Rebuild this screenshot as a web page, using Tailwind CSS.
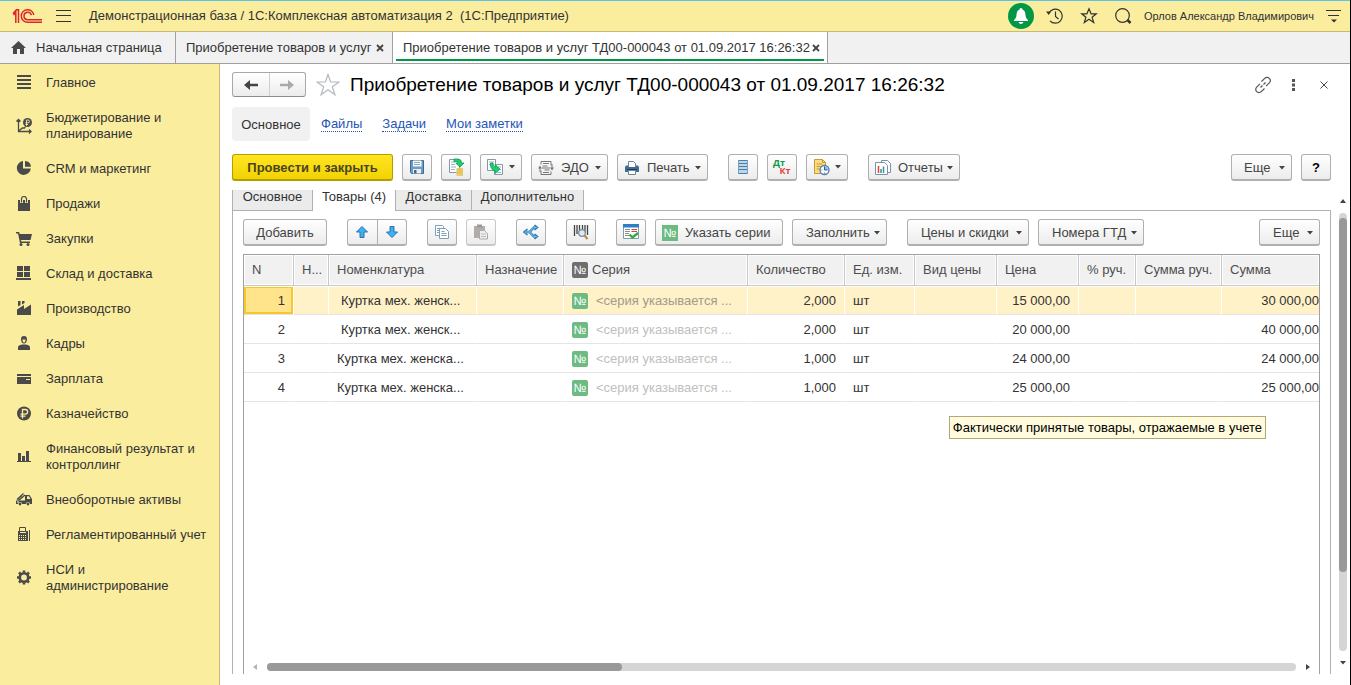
<!DOCTYPE html>
<html lang="ru">
<head>
<meta charset="utf-8">
<meta name="viewport" content="width=device-width, initial-scale=1">
<title>Приобретение товаров и услуг</title>
<script src="https://cdn.jsdelivr.net/npm/@tailwindcss/browser@4"></script>
</head>
<body class="flex h-screen flex-col overflow-hidden border-r border-black bg-white font-['Liberation_Sans',Arial,sans-serif] text-[13px] leading-4 text-[#333]">

<svg class="hidden" aria-hidden="true">
  <symbol id="caret" viewBox="0 0 6 4"><path d="M0 0h6L3 3.5z" fill="#444"/></symbol>
  <symbol id="cross" viewBox="0 0 8 8"><path d="M1 1l6 6M7 1L1 7" stroke="#444" stroke-width="1.8" fill="none"/></symbol>
</svg>

<!-- Application header -->
<header class="flex h-8 shrink-0 items-center border-t border-b border-t-[#5cc4ea] border-b-[#c8b978] bg-[#fbed9e] pl-3 pr-2">
  <svg class="h-[15px] w-[30px]" viewBox="0 0 30 15" fill="none" stroke="#e0242b" stroke-width="1.5" aria-label="1С" role="img">
    <path d="M1 4.500L3.800 1.500V14M1.500 6L4 3.500M6.500 14V.8H3.800"/>
    <path d="M21.800 6A6.300 6.300 0 1 0 15.500 13.300H30M19.300 6.200A3.700 3.700 0 1 0 15.500 10.700H30"/>
  </svg>
  <button class="ml-3.5 flex h-6 w-4 items-center" aria-label="Меню">
    <svg class="h-3 w-[15px]" viewBox="0 0 15 12" stroke="#333"><path d="M0 .5h15M0 5.500h15M0 11.500h15"/></svg>
  </button>
  <span class="ml-[17px] whitespace-pre">Демонстрационная база / 1С:Комплексная автоматизация 2  (1С:Предприятие)</span>
  <div class="ml-auto flex items-center">
    <button class="flex size-[26px] items-center justify-center rounded-full bg-[#009846]" aria-label="Уведомления">
      <svg class="h-4 w-4" viewBox="0 0 16 16" fill="#fff"><path d="M8 0c1 0 1.500.8 1.500 1.600C12 2.500 12.300 5 12.500 7c.2 2.400.8 3.600 2.500 5v1H1v-1c1.700-1.400 2.300-2.600 2.500-5 .2-2 .5-4.500 3-5.400C6.500.8 7 0 8 0zM5.500 14h5c-.5 1.300-1.400 2-2.500 2s-2-.7-2.500-2z"/></svg>
    </button>
    <button class="ml-3 size-[18px]" aria-label="История">
      <svg class="size-[18px]" viewBox="0 0 18 18" fill="none" stroke="#333" stroke-width="1.200"><path d="M3 6A7 7 0 1 1 4 13.800M9.500 4.500V9.500l3 2.500"/><path d="M0 4.500h5L2.800 8z" fill="#333" stroke="none"/></svg>
    </button>
    <button class="ml-4 size-[18px]" aria-label="Избранное">
      <svg class="size-[18px]" viewBox="0 0 18 18" fill="none" stroke="#333" stroke-width="1.200"><path d="M9 1.800l2.100 5h5.200l-4.200 3.400 1.600 5.300L9 12.300l-4.700 3.200 1.600-5.300L1.700 6.800h5.200z"/></svg>
    </button>
    <button class="ml-4 size-[18px]" aria-label="Поиск">
      <svg class="size-[18px]" viewBox="0 0 18 18" fill="none" stroke="#333"><circle cx="8.500" cy="8.500" r="6.800" stroke-width="1.200"/><path d="M13.500 13l3 3" stroke-width="2.500"/></svg>
    </button>
    <span class="ml-3 text-[11px]">Орлов Александр Владимирович</span>
    <button class="ml-[11px] h-[14px] w-[17px]" aria-label="Настройки">
      <svg class="h-[14px] w-[17px]" viewBox="0 0 17 14"><path d="M1 1.500h15M3 6.500h11" stroke="#333"/><path d="M6 10.500h6l-3 3z" fill="#333"/></svg>
    </button>
  </div>
</header>

<!-- Open windows -->
<nav class="flex h-8 shrink-0 items-stretch border-b border-[#a0a0a0] bg-[#f1f1f1]" aria-label="Открытые окна">
  <a href="#" class="flex w-[176px] items-center border-r border-[#a0a0a0] pl-[11px]">
    <svg class="h-[13px] w-[15px]" viewBox="0 0 15 13" fill="#4a4a4a"><path d="M7.500 0L15 7h-2v6H9V8H6v5H2V7H0z"/></svg>
    <span class="ml-[10px]">Начальная страница</span>
  </a>
  <div class="flex w-[217px] items-center border-r border-[#a0a0a0] pl-[10px]">
    <a href="#">Приобретение товаров и услуг</a>
    <button class="ml-auto mr-2 size-2" aria-label="Закрыть вкладку"><svg class="size-2"><use href="#cross"/></svg></button>
  </div>
  <div class="flex w-[435px] flex-col border-r border-[#a0a0a0] bg-white px-[3px] pb-[2px]">
    <div class="flex grow items-center border-b-2 border-[#009846] pl-[7px] pr-1 pt-1">
      <a href="#" class="whitespace-nowrap">Приобретение товаров и услуг ТД00-000043 от 01.09.2017 16:26:32</a>
      <button class="ml-auto size-2" aria-label="Закрыть вкладку"><svg class="size-2"><use href="#cross"/></svg></button>
    </div>
  </div>
</nav>

<div class="flex min-h-0 grow">

  <!-- Sections -->
  <aside class="w-[220px] shrink-0 border-r border-[#c8b978] bg-[#fbed9e] pt-px">
    <nav aria-label="Разделы">
      <a href="#" class="flex items-center gap-3.5 pb-[9px] pl-4 pt-[10px]"><svg class="size-4" viewBox="0 0 16 16" fill="#4a4a4a"><path d="M1 0h14v2H1zM1 4h14v2H1zM1 8h14v2H1zM1 12h14v2H1z"/></svg>Главное</a>
      <a href="#" class="flex items-center gap-3.5 pb-[9px] pl-4 pt-[10px]"><svg class="size-4 shrink-0" viewBox="0 0 16 16" fill="none" stroke="#4a4a4a"><path d="M2.500 1v12.500H15M.5 3.500l2-2 2 2M13 11.500l2 2-2 2M2.500 13l4-3h2l1-1.500" stroke-width="1.300"/><circle cx="11.500" cy="4.500" r="4.500" fill="#4a4a4a" stroke="none"/><path d="M10.500 7.800V2h1.500a1.400 1.400 0 0 1 0 2.900H9.500M9.500 6.500h2.500" stroke="#fbed9e" stroke-width=".9"/></svg><span>Бюджетирование и<br>планирование</span></a>
      <a href="#" class="flex items-center gap-3.5 pb-[9px] pl-4 pt-[10px]"><svg class="size-4" viewBox="0 0 16 16" fill="#4a4a4a"><path d="M7 0v7.500h7.800A7 7 0 1 1 7 0z"/><path d="M9 0a6.500 6.500 0 0 1 6 5.700H9z"/></svg>CRM и маркетинг</a>
      <a href="#" class="flex items-center gap-3.5 pb-[9px] pl-4 pt-[10px]"><svg class="size-4" viewBox="0 0 16 16"><path d="M2 4h12v11H2z" fill="#4a4a4a"/><path d="M5.500 7V3.500a2.500 2.500 0 0 1 5 0V7" fill="none" stroke="#fbed9e" stroke-width="3"/><path d="M5.500 6.500V3a2.500 2.500 0 0 1 5 0V6.500" fill="none" stroke="#4a4a4a" stroke-width="1.200"/></svg>Продажи</a>
      <a href="#" class="flex items-center gap-3.5 pb-[9px] pl-4 pt-[10px]"><svg class="size-4" viewBox="0 0 16 16" fill="#4a4a4a"><path d="M0 1h3.200l.5 2H16l-1.500 6H5l.3 1.500H14V12H4L2 2.500H0z"/><circle cx="5" cy="13.500" r="1.500"/><circle cx="12" cy="13.500" r="1.500"/></svg>Закупки</a>
      <a href="#" class="flex items-center gap-3.5 pb-[9px] pl-4 pt-[10px]"><svg class="size-4" viewBox="0 0 16 16" fill="#4a4a4a"><path d="M1 0h6v5H1zM8 0h6v5H8zM1 6h6v5H1zM8 6h6v5H8zM0 12h15v2H0z"/></svg>Склад и доставка</a>
      <a href="#" class="flex items-center gap-3.5 pb-[9px] pl-4 pt-[10px]"><svg class="size-4" viewBox="0 0 16 16" fill="#4a4a4a"><path d="M1 14V8.500L8 4v4l7-4.500V14zM2 0h2.500v4L2 5.500zM6 0h2.500v2L6 3.500z"/></svg>Производство</a>
      <a href="#" class="flex items-center gap-3.5 pb-[9px] pl-4 pt-[10px]"><svg class="size-4" viewBox="0 0 16 16" fill="#4a4a4a"><path d="M8 0c2.500 0 3 1.500 3 3.500S9.800 7.500 8 7.500 5 5.500 5 3.500 5.500 0 8 0zM2 14v-2.500c0-2 1.500-2.500 4-3h4c2.500.5 4 1 4 3V14z"/><path d="M6.500 3.500h3c0 2-.5 3-1.500 3s-1.500-1-1.500-3z" fill="#fbed9e"/></svg>Кадры</a>
      <a href="#" class="flex items-center gap-3.5 pb-[9px] pl-4 pt-[10px]"><svg class="size-4" viewBox="0 0 16 16" fill="#4a4a4a"><path d="M1 3h14v2H1zM1 6h14v7H1z"/><path d="M10 8h4v1h-4z" fill="#fbed9e"/></svg>Зарплата</a>
      <a href="#" class="flex items-center gap-3.5 pb-[9px] pl-4 pt-[10px]"><svg class="size-4" viewBox="0 0 16 16"><circle cx="8" cy="7.500" r="7" fill="#4a4a4a"/><path d="M6.500 12.500v-9h2.800a2.300 2.300 0 0 1 0 4.700H4.500M4.500 10.200h5" fill="none" stroke="#fbed9e" stroke-width="1.300"/></svg>Казначейство</a>
      <a href="#" class="flex items-center gap-3.5 pb-[9px] pl-4 pt-[10px]"><svg class="size-4 shrink-0" viewBox="0 0 16 16" fill="#4a4a4a"><path d="M1 12h14v1H1zM2 4h3v8H2zM6 7h3v5H6zM10 2h3v10h-3z"/></svg><span>Финансовый результат и<br>контроллинг</span></a>
      <a href="#" class="flex items-center gap-3.5 pb-[9px] pl-4 pt-[10px]"><svg class="size-4" viewBox="0 0 16 16"><path d="M1 7.500L7.500 1.500M2.500 8.500L9 3M2 6l2 2M4.500 4l2 2" fill="none" stroke="#4a4a4a" stroke-width="1.300"/><path d="M0 8.500h9V3h4.500L16 7v5h-2a2 2 0 0 0-4 0H6a2 2 0 0 0-4 0H0z" fill="#4a4a4a"/><path d="M11 4.200h2L14.500 7H11zM1 9.500h2v1H1z" fill="#fbed9e"/><circle cx="4" cy="12" r="1.400" fill="#4a4a4a"/><circle cx="12" cy="12" r="1.400" fill="#4a4a4a"/></svg>Внеоборотные активы</a>
      <a href="#" class="flex items-center gap-3.5 pb-[9px] pl-4 pt-[10px]"><svg class="size-4" viewBox="0 0 16 16"><path d="M2 4h10v10H2zM13 3h1v11h-1z" fill="#4a4a4a"/><path d="M3.500 4V.5h6V4" fill="none" stroke="#4a4a4a"/><path d="M4 5h6v1H4zM3 8h1v1H3zM5 8h1v1H5zM7 8h1v1H7zM9 8h1v1H9zM3 10h1v1H3zM5 10h1v1H5zM7 10h1v1H7zM9 10h1v1H9zM3 12h1v1H3zM5 12h1v1H5zM7 12h1v1H7zM9 12h1v1H9z" fill="#fbed9e"/></svg>Регламентированный учет</a>
      <a href="#" class="flex items-center gap-3.5 pb-[9px] pl-4 pt-[10px]"><svg class="size-4 shrink-0" viewBox="0 0 16 16" fill="none" stroke="#4a4a4a"><circle cx="8" cy="7.500" r="4.200" stroke-width="2.600"/><path d="M8 .5v2M8 12.500v2M1 7.500h2M13 7.500h2M3 2.500L4.500 4M11.500 11l1.500 1.500M3 12.500L4.500 11M11.500 4L13 2.500" stroke-width="2.600"/></svg><span>НСИ и<br>администрирование</span></a>
    </nav>
  </aside>

  <main class="flex min-w-0 grow flex-col pb-[11px] pl-3">

    <!-- Title -->
    <div class="flex h-[41px] shrink-0 items-center pr-[22px]">
      <div class="flex h-[25px] w-[74px] rounded-[3px] border border-[#a8a8a8] border-b-[#8c8c8c] bg-linear-to-b from-white to-[#ececec]">
        <button class="flex flex-1 items-center justify-center border-r border-[#cfcfcf]" aria-label="Назад"><svg class="h-3 w-3.5" viewBox="0 0 14 12"><path d="M0 6l6-5v3.800h8v2.400H6V11z" fill="#444"/></svg></button>
        <button class="flex flex-1 items-center justify-center" aria-label="Вперед"><svg class="h-3 w-3.5" viewBox="0 0 14 12"><path d="M14 6L8 1v3.800H0v2.400h8V11z" fill="#aaa"/></svg></button>
      </div>
      <button class="ml-[10px] size-6" aria-label="В избранное"><svg class="size-6" viewBox="0 0 24 24" fill="none" stroke="#b4b9be" stroke-width="1.200"><path d="M12 1.500l2.600 7.500H23l-6.700 4.700 2.600 8L12 16.800l-6.900 4.900 2.600-8L1 9h8.400z"/></svg></button>
      <h1 class="ml-2.5 whitespace-nowrap text-[19px] leading-6 text-black">Приобретение товаров и услуг ТД00-000043 от 01.09.2017 16:26:32</h1>
      <div class="ml-auto flex items-center">
        <button class="size-[18px]" aria-label="Ссылка"><svg class="size-[18px]" viewBox="0 0 18 18" fill="none" stroke="#555" stroke-width="1.200"><path d="M7.500 5.500l3.200-3.200a3.200 3.200 0 0 1 4.600 4.600L12 10.200M10.500 12.500l-3.200 3.200a3.200 3.200 0 0 1-4.600-4.600L6 7.800M6.500 11.500l2-2M9.500 8.500l2-2"/></svg></button>
        <button class="ml-[19px] h-3 w-[5px]" aria-label="Действия"><svg class="h-3 w-[5px]" viewBox="0 0 5 12" fill="#555"><path d="M1 0h3v3H1zM1 4.500h3v3H1zM1 9h3v3H1z"/></svg></button>
        <button class="ml-6 size-2" aria-label="Закрыть"><svg class="size-2" viewBox="0 0 8 8" stroke="#444" stroke-width="1"><path d="M.5.5l7 7M7.500.5l-7 7"/></svg></button>
      </div>
    </div>

    <!-- Related pages -->
    <nav class="mt-0.5 flex h-[34px] shrink-0 items-center text-[#1f55b5]" aria-label="Навигация формы">
      <span class="flex h-full w-[78px] items-center justify-center rounded bg-[#f1f1f1] pt-px text-[#333]">Основное</span>
      <a href="#" class="ml-[11px] mt-px border-b border-dotted border-[#1f55b5] leading-[14px]">Файлы</a>
      <a href="#" class="ml-5 mt-px border-b border-dotted border-[#1f55b5] leading-[14px]">Задачи</a>
      <a href="#" class="ml-5 mt-px border-b border-dotted border-[#1f55b5] leading-[14px]">Мои заметки</a>
    </nav>

    <!-- Document commands -->
    <div class="mt-[13px] flex h-[27px] shrink-0 gap-[9px] pr-[19px]">
      <button class="w-[161px] rounded-[3px] border border-[#b59d00] border-b-2 bg-linear-to-b from-[#ffe620] to-[#f2d200] pt-px font-bold text-[#4a4420]">Провести и закрыть</button>
      <button aria-label="Записать" class="flex w-[30px] items-center justify-center rounded-[3px] border border-b-2 border-[#b0b0b0] bg-linear-to-b from-white to-[#ececec]"><svg class="size-4" viewBox="0 0 16 16"><path d="M1.500 1.500h13v13h-12l-1-1z" fill="#6c9cc5" stroke="#41698c"/><path d="M4 1.500h8.500v6H4z" fill="#f4f8fb"/><path d="M5 3.500h6M5 5.500h6" stroke="#8fa9bd"/><path d="M4 10h8v4.500H4z" fill="#e8eef3"/><path d="M5 11h2.500v3.500H5z" fill="#41698c"/></svg></button>
      <button aria-label="Провести" class="flex w-[30px] items-center justify-center rounded-[3px] border border-b-2 border-[#b0b0b0] bg-linear-to-b from-white to-[#ececec]"><svg class="size-[18px]" viewBox="0 0 18 18"><path d="M2.500 1.500h10v13h-10z" fill="#fff" stroke="#8398aa"/><path d="M4 4h4M4 6.500h4M4 9h5M4 11.500h4" stroke="#9fb0be"/><path d="M7 1h4q3.500 0 3.500 4h2.500L13 9 8.700 5h2.300Q11 3.500 9 3.500H7z" fill="#19d070" stroke="#129a50" stroke-width=".8"/><path d="M9.500 10.500h6.500v6H9.500z" fill="#f8e08a"/><path d="M9.500 11h6.500M9.500 13h6.500M9.500 15h6.500M9.500 17h6.500" stroke="#d9a92d"/></svg></button>
      <button aria-label="Создать на основании" class="flex w-[42px] items-center gap-1 rounded-[3px] border border-b-2 border-[#b0b0b0] bg-linear-to-b from-white to-[#ececec] pl-1.5"><svg class="size-[18px]" viewBox="0 0 18 18"><path d="M.5 1.500h8v11h-8z" fill="#fff" stroke="#8398aa"/><path d="M2 4h5M2 6.500h3" stroke="#9fb0be"/><path d="M9.500 6.500h6v10h-8v-4z" fill="#fff" stroke="#8398aa"/><path d="M11 9h3M11 11.500h3M10 14.500h4" stroke="#9fb0be"/><path d="M3.500 5H6q0 3.500 2 4.500V6.500l5 4.500-5 4.500v-2.700Q3 12 3.500 5z" fill="#19d070" stroke="#129a50" stroke-width=".8"/></svg><svg class="h-1 w-1.5"><use href="#caret"/></svg></button>
      <button class="flex w-[77px] items-center rounded-[3px] border border-b-2 border-[#b0b0b0] bg-linear-to-b from-white to-[#ececec] px-1.5 pt-px text-[#444]"><svg class="size-4" viewBox="0 0 16 16" fill="none" stroke="#777"><path d="M3 4.500v-3h10v4M13 11.500v3H3v-4M5 3.500h6M4.500 6h5M4 8h8M6.500 10h5M5 12.500h6M2 12V7.500h1M14 4v4.500h-1"/><path d="M0 8.500h4L2 5.500zM12 7.500h4l-2 3z" fill="#777" stroke="none"/></svg><span class="ml-[7px]">ЭДО</span><svg class="ml-auto h-1 w-1.5"><use href="#caret"/></svg></button>
      <button class="flex w-[91px] items-center rounded-[3px] border border-b-2 border-[#b0b0b0] bg-linear-to-b from-white to-[#ececec] px-1.5 pt-px text-[#444]"><svg class="size-4" viewBox="0 0 16 16"><path d="M4.500 7V1.500h5l2 2V7" fill="#fff" stroke="#6d8296"/><path d="M2 5.500h2V7h8V5.500h2l1 1.500v5H1V7z" fill="#3f6d94"/><path d="M3 9.500h10" stroke="#1d3c59"/><path d="M4.500 10.500h7v4h-7z" fill="#fff" stroke="#6d8296"/></svg><span class="ml-[7px]">Печать</span><svg class="ml-auto h-1 w-1.5"><use href="#caret"/></svg></button>
      <button aria-label="Реестр" class="ml-[11px] flex w-[30px] items-center justify-center rounded-[3px] border border-b-2 border-[#b0b0b0] bg-linear-to-b from-white to-[#ececec]"><svg class="h-[14px] w-3" viewBox="0 0 12 14"><path d="M1 0h10v14H1z" fill="#b9d6ea"/><path d="M1 .5h10M1 3.500h10M1 6.500h10M1 9.500h10M1 13.500h10" stroke="#4e7da1"/><path d="M1.500 0v14M10.500 0v14" stroke="#7aa1be"/></svg></button>
      <button aria-label="Движения документа" class="flex w-[30px] flex-col items-center justify-center rounded-[3px] border border-b-2 border-[#b0b0b0] bg-linear-to-b from-white to-[#ececec] font-['Open_Sans',sans-serif] text-[9px] leading-[8px] font-bold"><span class="pr-1.5 text-[#12964b]">Дт</span><span class="pl-1.5 text-[#e04038]">Кт</span></button>
      <button aria-label="Структура подчиненности" class="flex w-[42px] items-center gap-1 rounded-[3px] border border-b-2 border-[#b0b0b0] bg-linear-to-b from-white to-[#ececec] pl-1.5"><svg class="size-[18px]" viewBox="0 0 18 18"><path d="M1.500 1.500h8l3 3v11h-11z" fill="#fbdc80" stroke="#c89a35"/><path d="M9.500 1.500v3h3M3.500 6h6M3.500 8.500h4M3.500 11h3" fill="none" stroke="#c89a35"/><circle cx="11.500" cy="12" r="4.500" fill="#fff" stroke="#4181b5" stroke-width="1.300"/><path d="M11.500 12V8.500A3.500 3.500 0 0 1 15 12z" fill="#8cbce0"/><path d="M11.500 8.500V12h3" fill="none" stroke="#2e6290"/><path d="M8.500 12h1M11.500 14.500v1" stroke="#e04038"/></svg><svg class="h-1 w-1.5"><use href="#caret"/></svg></button>
      <button class="ml-[11px] flex w-[92px] items-center rounded-[3px] border border-b-2 border-[#b0b0b0] bg-linear-to-b from-white to-[#ececec] px-1.5 pt-px text-[#444]"><svg class="size-4" viewBox="0 0 16 16"><path d="M6.500.5h6l3 3v9h-9z" fill="#fff" stroke="#7b93a8"/><path d="M.5 2.500h9l3 3v9H.5z" fill="#fff" stroke="#7b93a8"/><path d="M3.500 6v7" stroke="#e04038" stroke-width="1.500"/><path d="M6 9v4" stroke="#2ba35a" stroke-width="1.500"/><path d="M8.500 6.500V13" stroke="#4a86b8" stroke-width="1.500"/></svg><span class="ml-[7px]">Отчеты</span><svg class="ml-auto h-1 w-1.5"><use href="#caret"/></svg></button>
      <button class="ml-auto flex w-[61px] items-center rounded-[3px] border border-b-2 border-[#b0b0b0] bg-linear-to-b from-white to-[#ececec] pl-3 pr-1.5 pt-px text-[#444]">Еще<svg class="ml-auto h-1 w-1.5"><use href="#caret"/></svg></button>
      <button class="w-[30px] rounded-[3px] border border-b-2 border-[#b0b0b0] bg-linear-to-b from-white to-[#ececec] pt-px font-bold text-black">?</button>
    </div>

    <div class="mt-[9px] flex min-h-0 grow">
      <div class="flex min-w-0 grow flex-col">

        <!-- Document tabs -->
        <div class="flex h-[21px] shrink-0 leading-[14px]" role="tablist">
          <button role="tab" class="w-[81px] border-x border-b border-[#b0b0b0] bg-[#ebebeb] pb-1.5">Основное</button>
          <button role="tab" aria-selected="true" class="w-[82px] border-b border-white pb-1.5">Товары (4)</button>
          <button role="tab" class="w-[77px] border-x border-b border-[#b0b0b0] bg-[#ebebeb] pb-1.5">Доставка</button>
          <button role="tab" class="w-[112px] border-r border-b border-[#b0b0b0] bg-[#ebebeb] pb-1.5">Дополнительно</button>
          <div class="grow border-b border-[#b0b0b0]"></div>
        </div>

        <div class="flex min-h-0 grow flex-col border-x border-[#b0b0b0] px-2.5 pt-2">

          <!-- Table commands -->
          <div class="flex h-[27px] shrink-0 gap-[9px] text-[#444]">
            <button class="w-[84px] rounded-[3px] border border-b-2 border-[#b0b0b0] bg-linear-to-b from-white to-[#ececec] pt-px">Добавить</button>
            <div class="ml-[11px] flex w-[60px] rounded-[3px] border border-b-2 border-[#b0b0b0] bg-linear-to-b from-white to-[#ececec]">
              <button aria-label="Вверх" class="flex flex-1 items-center justify-center border-r border-[#b0b0b0]"><svg class="size-3" viewBox="0 0 12 12"><path d="M6 .5L11.500 6H8v5.500H4V6H.5z" fill="#41aef0" stroke="#2276ac"/></svg></button>
              <button aria-label="Вниз" class="flex flex-1 items-center justify-center"><svg class="size-3" viewBox="0 0 12 12"><path d="M6 11.500L.5 6H4V.5h4V6h3.500z" fill="#41aef0" stroke="#2276ac"/></svg></button>
            </div>
            <button aria-label="Копировать" class="ml-[11px] flex w-[30px] items-center justify-center rounded-[3px] border border-b-2 border-[#b0b0b0] bg-linear-to-b from-white to-[#ececec]"><svg class="size-4" viewBox="0 0 16 16" fill="#fff" stroke="#7da0bd"><path d="M1.500 1.500h7l1 1v9h-8z"/><path d="M3 4.500h4M3 6.500h3M3 8.500h3"/><path d="M5.500 4.500h6l3 3v7h-9z"/><path d="M7.500 7.500h3M7.500 9.500h5M7.500 11.500h5"/></svg></button>
            <button aria-label="Вставить" class="flex w-[30px] items-center justify-center rounded-[3px] border border-b-2 border-[#c8c8c8] bg-linear-to-b from-white to-[#ececec]"><svg class="size-4" viewBox="0 0 16 16"><path d="M1 2h11v12H1z" fill="#b5aba7"/><path d="M4 .5h5v3H4z" fill="#999"/><path d="M6.500 6.500h5l3 3v5.500h-8z" fill="#eee" stroke="#aaa"/><path d="M8 10h5M8 12.500h5" stroke="#bbb"/></svg></button>
            <button aria-label="Разбить строку" class="ml-[11px] flex w-[30px] items-center justify-center rounded-[3px] border border-b-2 border-[#b0b0b0] bg-linear-to-b from-white to-[#ececec]"><svg class="size-4" viewBox="0 0 16 16" fill="none"><path d="M3 8h3.500L11 3.500h2M6.500 8l4.500 4.500h2" stroke="#2b7db8" stroke-width="2.400"/><path d="M4.500 5L1 8l3.500 3M11.500 1l3 2.500-3 2.500M11.500 10l3 2.500-3 2.500" stroke="#2b7db8" stroke-width="1.600"/><path d="M2.500 8h4L11 3.500h2.500M6.500 8l4.500 4.500h2.500" stroke="#7cc9f5"/></svg></button>
            <button aria-label="Поиск по штрихкоду" class="ml-[11px] flex w-[30px] items-center justify-center rounded-[3px] border border-b-2 border-[#b0b0b0] bg-linear-to-b from-white to-[#ececec]"><svg class="size-4" viewBox="0 0 16 16"><path d="M1.500 1v11M4 1v9M6.500 1v8M9.500 1v8M12 1v8M14.500 1v10" stroke="#444" stroke-width="1.300"/><circle cx="9" cy="9" r="3.300" fill="#d8ebf6" stroke="#7f8b94" stroke-width="1.200"/><path d="M11.500 11.500L14.500 15" stroke="#b78a4c" stroke-width="2"/></svg></button>
            <button aria-label="Заполнить и проверить" class="ml-[11px] flex w-[30px] items-center justify-center rounded-[3px] border border-b-2 border-[#b0b0b0] bg-linear-to-b from-white to-[#ececec]"><svg class="size-4" viewBox="0 0 16 16"><path d="M.5.5h15v14H.5z" fill="#fff" stroke="#7d9bb5"/><path d="M0 0h16v3.500H0z" fill="#2b80c5"/><path d="M2 5.500h5M2 7.500h5M2 9.500h4M2 11.500h4" stroke="#8c8c8c"/><path d="M8.500 5.500H14M8.500 7.500H14" stroke="#e04038"/><path d="M6.500 10.500l3 3L15 9" fill="none" stroke="#35a843" stroke-width="2.400"/></svg></button>
            <button class="flex w-[128px] items-center rounded-[3px] border border-b-2 border-[#b0b0b0] bg-linear-to-b from-white to-[#ececec] pl-1.5 pt-px"><span class="flex size-4 items-center justify-center bg-[#6dbb83] text-[12px] text-white">№</span><span class="ml-[7px]">Указать серии</span></button>
            <button class="flex w-[95px] items-center rounded-[3px] border border-b-2 border-[#b0b0b0] bg-linear-to-b from-white to-[#ececec] pl-[13px] pr-1.5 pt-px">Заполнить<svg class="ml-auto h-1 w-1.5"><use href="#caret"/></svg></button>
            <button class="ml-[11px] flex w-[122px] items-center rounded-[3px] border border-b-2 border-[#b0b0b0] bg-linear-to-b from-white to-[#ececec] pl-[13px] pr-1.5 pt-px">Цены и скидки<svg class="ml-auto h-1 w-1.5"><use href="#caret"/></svg></button>
            <button class="flex w-[106px] items-center rounded-[3px] border border-b-2 border-[#b0b0b0] bg-linear-to-b from-white to-[#ececec] pl-[13px] pr-1.5 pt-px">Номера ГТД<svg class="ml-auto h-1 w-1.5"><use href="#caret"/></svg></button>
            <button class="ml-auto flex w-[61px] items-center rounded-[3px] border border-b-2 border-[#b0b0b0] bg-linear-to-b from-white to-[#ececec] pl-[13px] pr-1.5 pt-px">Еще<svg class="ml-auto h-1 w-1.5"><use href="#caret"/></svg></button>
          </div>

          <!-- Goods -->
          <div class="relative mt-2 flex min-h-0 grow flex-col border-x border-t border-[#a0a0a0]">
            <table class="w-full table-fixed border-separate border-spacing-0">
              <colgroup><col class="w-[50px]"><col class="w-[35px]"><col class="w-[148px]"><col class="w-[87px]"><col class="w-[184px]"><col class="w-[97px]"><col class="w-[70px]"><col class="w-[82px]"><col class="w-[82px]"><col class="w-[57px]"><col class="w-[86px]"><col></colgroup>
              <thead>
                <tr class="h-[31px] text-left text-[#4d4d4d] *:overflow-hidden *:border-r *:border-b *:border-[#c8c8c8] *:bg-[#f1f1f1] *:px-2 *:font-normal *:whitespace-nowrap *:inset-ring *:inset-ring-white">
                  <th>N</th><th>Н...</th><th>Номенклатура</th><th>Назначение</th>
                  <th><span class="flex items-center gap-1"><span class="flex size-4 items-center justify-center rounded-xs bg-[#6e6e6e] text-[12px] text-white">№</span>Серия</span></th>
                  <th>Количество</th><th>Ед. изм.</th><th>Вид цены</th><th>Цена</th><th>% руч.</th><th>Сумма руч.</th><th class="border-r-0!">Сумма</th>
                </tr>
              </thead>
              <tbody>
                <tr class="h-[29px] *:border-r *:border-b *:border-white *:border-b-[#e4e4e4] *:bg-[#fff1c8] *:px-2 *:pt-px *:whitespace-nowrap *:inset-shadow-[0_1px_0_#fff]">
                  <td class="bg-[#ffe48c]! text-right inset-ring-2 inset-ring-[#f8c828]">1</td><td></td><td><span class="pl-1">Куртка мех. женск...</span></td><td></td>
                  <td><span class="flex items-center gap-2 text-[#a19b8b]"><span class="flex size-4 items-center justify-center rounded-xs bg-[#6dbb83] text-[12px] text-white">№</span>&lt;серия указывается ...</span></td>
                  <td class="text-right">2,000</td><td>шт</td><td></td><td class="text-right">15 000,00</td><td></td><td></td><td class="border-r-0! px-0! text-right">30 000,00</td>
                </tr>
                <tr class="h-[29px] *:border-r *:border-b *:border-white *:border-b-[#e4e4e4] *:px-2 *:pt-px *:whitespace-nowrap">
                  <td class="text-right">2</td><td></td><td><span class="pl-1">Куртка мех. женск...</span></td><td></td>
                  <td><span class="flex items-center gap-2 text-[#c0c0c0]"><span class="flex size-4 items-center justify-center rounded-xs bg-[#6dbb83] text-[12px] text-white">№</span>&lt;серия указывается ...</span></td>
                  <td class="text-right">2,000</td><td>шт</td><td></td><td class="text-right">20 000,00</td><td></td><td></td><td class="border-r-0! px-0! text-right">40 000,00</td>
                </tr>
                <tr class="h-[29px] *:border-r *:border-b *:border-white *:border-b-[#e4e4e4] *:px-2 *:pt-px *:whitespace-nowrap">
                  <td class="text-right">3</td><td></td><td>Куртка мех. женска...</td><td></td>
                  <td><span class="flex items-center gap-2 text-[#c0c0c0]"><span class="flex size-4 items-center justify-center rounded-xs bg-[#6dbb83] text-[12px] text-white">№</span>&lt;серия указывается ...</span></td>
                  <td class="text-right">1,000</td><td>шт</td><td></td><td class="text-right">24 000,00</td><td></td><td></td><td class="border-r-0! px-0! text-right">24 000,00</td>
                </tr>
                <tr class="h-[29px] *:border-r *:border-b *:border-white *:border-b-[#e4e4e4] *:px-2 *:pt-px *:whitespace-nowrap">
                  <td class="text-right">4</td><td></td><td>Куртка мех. женска...</td><td></td>
                  <td><span class="flex items-center gap-2 text-[#c0c0c0]"><span class="flex size-4 items-center justify-center rounded-xs bg-[#6dbb83] text-[12px] text-white">№</span>&lt;серия указывается ...</span></td>
                  <td class="text-right">1,000</td><td>шт</td><td></td><td class="text-right">25 000,00</td><td></td><td></td><td class="border-r-0! px-0! text-right">25 000,00</td>
                </tr>
              </tbody>
            </table>

            <div role="tooltip" class="absolute right-[53px] top-[161px] border border-[#b0a878] bg-[#fffbdc] px-[3px] pb-[2px] pt-[3px] leading-4 whitespace-nowrap text-black">Фактически принятые товары, отражаемые в учете</div>

            <!-- Horizontal scroll bar -->
            <div class="mt-auto flex h-2 items-center mb-[3px] px-[9px]">
              <svg class="h-1.5 w-1" viewBox="0 0 4 6"><path d="M4 0v6L0 3z" fill="#b5b5b5"/></svg>
              <div class="mx-2.5 h-2 grow rounded-full bg-[#d5d5d5]"><div class="h-2 w-[355px] rounded-full bg-[#999]"></div></div>
              <svg class="h-1.5 w-1" viewBox="0 0 4 6"><path d="M0 0v6l4-3z" fill="#444"/></svg>
            </div>
          </div>
        </div>
      </div>

      <!-- Vertical scroll bar -->
      <div class="flex w-[19px] shrink-0 flex-col items-center gap-2.5 pb-[9px] pl-1 pt-[9px]">
        <svg class="h-1 w-1.5" viewBox="0 0 6 4"><path d="M0 4h6L3 0z" fill="#444"/></svg>
        <div class="w-2 grow rounded-full bg-[#d5d5d5] pt-[5px]"><div class="h-[354px] rounded-full bg-[#999]"></div></div>
        <svg class="h-1 w-1.5"><use href="#caret"/></svg>
      </div>
    </div>
  </main>
</div>
</body>
</html>
